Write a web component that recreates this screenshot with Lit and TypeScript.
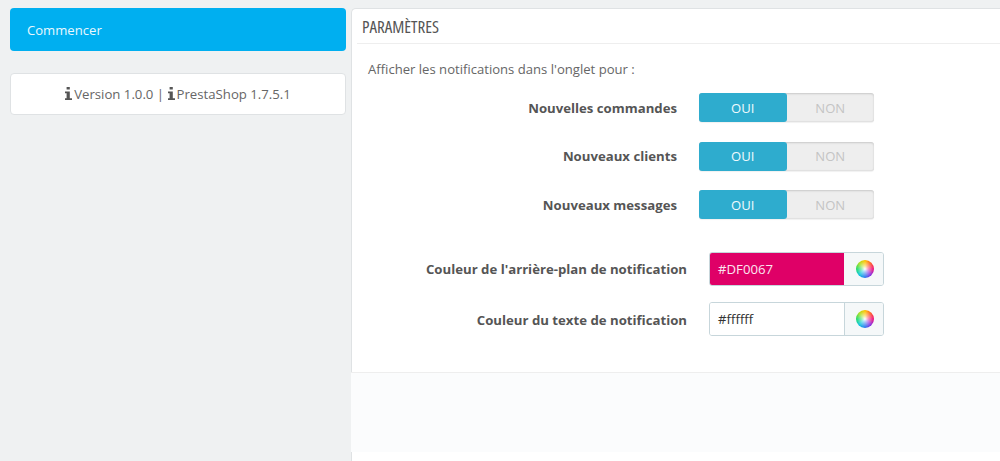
import { LitElement, html, css } from "lit";
import { customElement } from "lit/decorators.js";

const infoIcon = html`<svg class="info" viewBox="0 0 7 13" width="7" height="13" aria-hidden="true"><path d="M1.6 0h3.2v2.6H1.6zM0 4.4h4.8v6.8H7V13H0v-1.8h1.6V6.2H0z" fill="currentColor"/></svg>`;

@customElement("app-root")
export class AppRoot extends LitElement {
  static styles = css`
    :host {
      display: block;
      height: 461px;
      overflow: hidden;
      background: #eff1f2;
      font-family: "Open Sans", sans-serif;
      color: #555;
    }
    .layout {
      display: flex;
      align-items: flex-start;
      padding: 8px 0 0 10px;
      gap: 5px;
    }
    .side {
      width: 336px;
      flex: none;
      display: flex;
      flex-direction: column;
      gap: 22px;
    }
    .start {
      height: 43px;
      box-sizing: border-box;
      background: #00aff0;
      color: #eaf8fe;
      border-radius: 4px;
      padding-left: 17px;
      display: flex;
      align-items: center;
      font-size: 13.1px;
    }
    .version {
      height: 42px;
      box-sizing: border-box;
      background: #fff;
      border: 1px solid #dfe2e4;
      border-radius: 4px;
      display: flex;
      align-items: center;
      justify-content: center;
      font-size: 13.2px;
      color: #666;
      white-space: pre;
    }
    .info {
      flex: none;
      color: #555;
      margin-right: 2px;
      margin-top: -1px;
    }
    .panel {
      flex: 1;
      min-width: 0;
      height: 470px;
      box-sizing: border-box;
      background: #fff;
      border: 1px solid #dfe2e4;
      border-right: 0;
      border-bottom: 0;
      border-radius: 5px 0 0 0;
      display: flex;
      flex-direction: column;
    }
    .heading {
      height: 35px;
      box-sizing: border-box;
      margin-left: 5px;
      padding: 1px 0 0 5px;
      border-bottom: 1px solid #eeeeee;
      display: flex;
      align-items: center;
      font-family: "Open Sans", sans-serif;
      font-stretch: 75%;
      font-size: 17px;
      color: #555;
    }
    .body {
      flex: none;
      height: 328px;
      box-sizing: border-box;
      padding: 16px 0 0 16px;
    }
    .intro {
      font-size: 13.1px;
      line-height: 18px;
      color: #666;
      margin-bottom: 15px;
    }
    .rows {
      display: flex;
      flex-direction: column;
      margin-left: -16px;
      gap: 19.5px;
    }
    .row {
      display: flex;
      align-items: center;
      gap: 22px;
      height: 29px;
    }
    .colors {
      display: flex;
      flex-direction: column;
      gap: 16px;
      margin: 32.5px 0 0 -16px;
    }
    .color-row {
      display: flex;
      align-items: center;
      gap: 22px;
      height: 34px;
    }
    .label {
      width: 325px;
      flex: none;
      text-align: right;
      font-size: 13.2px;
      font-weight: 700;
      color: #555;
    }
    .label.wide {
      width: 335px;
    }
    .label.low {
      padding-top: 2px;
    }
    .switch {
      display: flex;
      width: 175px;
      height: 29px;
      font-size: 13.1px;
      border-radius: 3px;
      background: #eeeeee;
      box-shadow: inset 0 1px 2px rgba(0, 0, 0, 0.16), inset 0 -1px 1px rgba(0, 0, 0, 0.05), 0 1px 1px rgba(0, 0, 0, 0.06);
    }
    .opt {
      flex: 1;
      display: flex;
      align-items: center;
      justify-content: center;
    }
    .opt.on {
      background: #2eacce;
      color: #f0fafd;
      border-radius: 3px;
    }
    .opt.off {
      color: #c4c4c4;
    }
    .input {
      display: flex;
      width: 175px;
      height: 34px;
      box-sizing: border-box;
      border: 1px solid #c7d6db;
      border-radius: 3px;
      overflow: hidden;
      font-size: 13.2px;
    }
    .value {
      flex: 1;
      display: flex;
      align-items: center;
      padding-left: 8px;
      color: #333;
      background: #fff;
    }
    .value.pink {
      background: #df0067;
      color: #fbe6ef;
    }
    .picker {
      width: 39px;
      flex: none;
      box-sizing: border-box;
      border-left: 1px solid #c7d6db;
      background: #f5f8f9;
      padding-left: 2px;
      display: flex;
      align-items: center;
      justify-content: center;
    }
    .input.pinked .picker {
      border-left: 0;
    }
    .wheel {
      width: 18px;
      height: 18px;
      border-radius: 50%;
      background:
        radial-gradient(circle, #fff 0, rgba(255, 255, 255, 0.55) 25%, rgba(255, 255, 255, 0) 65%),
        conic-gradient(#ffc400, #ff5a2a, #f0157f, #8a2fe0, #2f7af0, #10c8e0, #22dc6a, #a8e020, #ffc400);
    }
    .footer {
      height: 80px;
      margin-left: -1px;
      background: #fbfcfd;
      border-top: 1px solid #eeeeee;
      box-sizing: border-box;
    }
  `;

  render() {
    const toggles = ["Nouvelles commandes", "Nouveaux clients", "Nouveaux messages"];
    return html`
      <div class="layout">
        <div class="side">
          <div class="start">Commencer</div>
          <div class="version">${infoIcon}<span>Version 1.0.0 | </span>${infoIcon}<span>PrestaShop 1.7.5.1</span></div>
        </div>
        <div class="panel">
          <div class="heading">PARAMÈTRES</div>
          <div class="body">
            <div class="intro">Afficher les notifications dans l'onglet pour :</div>
            <div class="rows">
              ${toggles.map(
                (t) => html`<div class="row">
                  <div class="label">${t}</div>
                  <div class="switch"><div class="opt on">OUI</div><div class="opt off">NON</div></div>
                </div>`
              )}
            </div>
            <div class="colors">
              <div class="color-row">
                <div class="label wide">Couleur de l'arrière-plan de notification</div>
                <div class="input pinked"><div class="value pink">#DF0067</div><div class="picker"><div class="wheel"></div></div></div>
              </div>
              <div class="color-row">
                <div class="label wide low">Couleur du texte de notification</div>
                <div class="input"><div class="value">#ffffff</div><div class="picker"><div class="wheel"></div></div></div>
              </div>
            </div>
          </div>
          <div class="footer"></div>
        </div>
      </div>
    `;
  }
}
